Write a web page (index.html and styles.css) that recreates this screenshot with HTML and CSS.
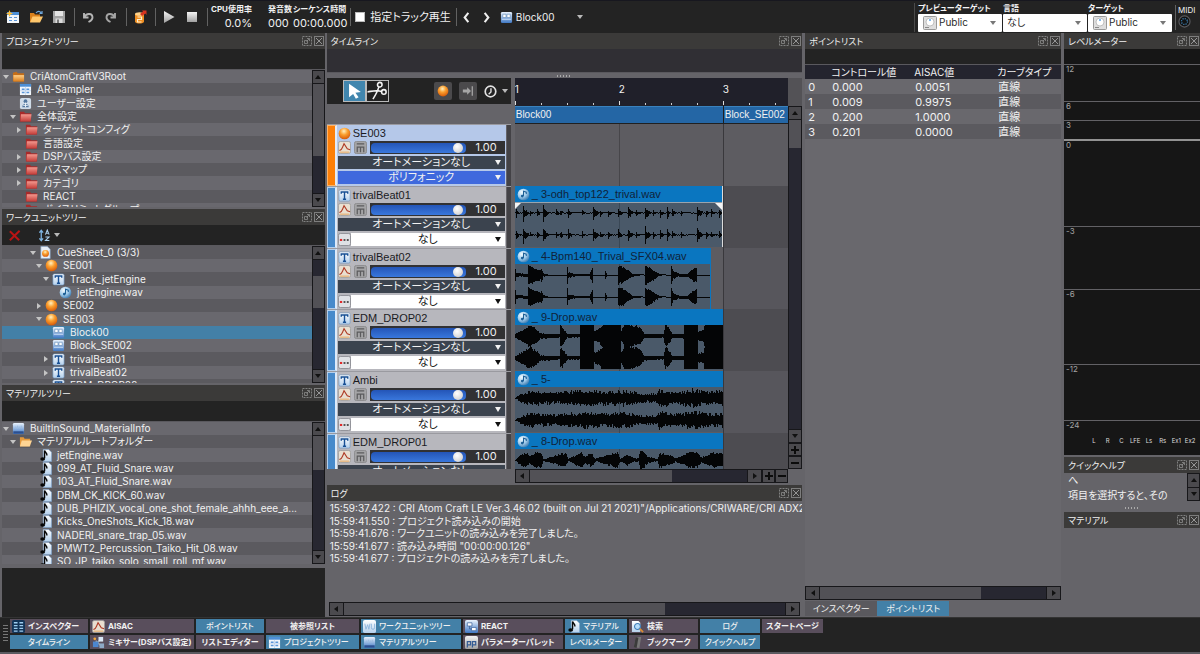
FILE: index.html
```html
<!DOCTYPE html>
<html lang="ja">
<head>
<meta charset="utf-8">
<title>CRI Atom Craft</title>
<link rel="stylesheet" href="styles.css">
</head>
<body>
<svg class="defs" aria-hidden="true">
  <defs>
    <linearGradient id="g-blue" x2="0" y2="1"><stop offset="0" stop-color="#eaf3fd"/><stop offset="1" stop-color="#3f78c4"/></linearGradient>
    <linearGradient id="g-pale" x2="0" y2="1"><stop offset="0" stop-color="#fff"/><stop offset="1" stop-color="#b4d0ec"/></linearGradient>
    <linearGradient id="g-red" x2="0" y2="1"><stop offset="0" stop-color="#f59a90"/><stop offset="1" stop-color="#c23a36"/></linearGradient>
    <linearGradient id="g-gold" x2="0" y2="1"><stop offset="0" stop-color="#ffd089"/><stop offset="1" stop-color="#d97b18"/></linearGradient>
    <linearGradient id="g-steel" x2="0" y2="1"><stop offset="0" stop-color="#f4f4f4"/><stop offset="1" stop-color="#a0a0a0"/></linearGradient>
    <radialGradient id="g-orange" cx=".45" cy=".3" r=".7"><stop offset="0" stop-color="#fff0c0"/><stop offset=".45" stop-color="#fba030"/><stop offset="1" stop-color="#d65a08"/></radialGradient>
    <radialGradient id="g-ball" cx=".35" cy=".3" r=".7"><stop offset="0" stop-color="#f2fbff"/><stop offset=".6" stop-color="#9dc9ea"/><stop offset="1" stop-color="#4b86b8"/></radialGradient>
  </defs>
  <symbol id="i-table" viewBox="0 0 14 14"><rect x="1" y="1" width="12" height="12" fill="#f2f6fb"/><rect x="1" y="1" width="12" height="3" fill="#4d8fd6"/><path d="M3 6h3v1.500H3zM8 6h3v1.500H8zM3 9.500h3V11H3zM8 9.500h3V11H8z" fill="#5b96d8"/><path d="M1 8.300h12M7 4v9" stroke="#a9c6e6" stroke-width=".6"/></symbol>
  <symbol id="i-new" viewBox="0 0 14 14"><rect x="1" y="2" width="12" height="11" fill="#f2f6fb"/><rect x="1" y="2" width="12" height="3" fill="#4d8fd6"/><path d="M3 7h3v1H3zM8 7h3v1H8zM3 10h3v1H3zM8 10h3v1H8z" fill="#5b96d8"/><path d="M3.500 0l1 2.400L7 3.500l-2.500 1L3.500 7l-1-2.500L0 3.500l2.500-1z" fill="#ffbf3a"/></symbol>
  <symbol id="i-open" viewBox="0 0 14 14"><path d="M1 3h4l1 1.500h5V12H1z" fill="#d9801c"/><path d="M3.500 6.500H14L11 12.500H1z" fill="#ffc76c"/><path d="M7 3c2-2.500 4-2 5 0M13 1v2.500h-2.500" stroke="#6ea7de" fill="none" stroke-width="1.200"/></symbol>
  <symbol id="i-save" viewBox="0 0 14 14"><path d="M1 1h12v12H1z" fill="#a3a3a3"/><path d="M3 1h8v5H3z" fill="#e4e4e4"/><path d="M3.500 8.500h7V13h-7z" fill="#dcdcdc"/><path d="M5 9.500h2V13H5z" fill="#777"/></symbol>
  <symbol id="i-undo" viewBox="0 0 14 14"><path d="M3 3v4.500h4.500M3.500 7C5 3.500 11 2.500 11.500 7c.2 2.500-2 4-4 5" fill="none" stroke="#b5b5b5" stroke-width="1.900"/></symbol>
  <symbol id="i-redo" viewBox="0 0 14 14"><path d="M11 3v4.500H6.500M10.500 7C9 3.500 3 2.500 2.500 7c-.2 2.500 2 4 4 5" fill="none" stroke="#a5a5a5" stroke-width="1.900"/></symbol>
  <symbol id="i-build" viewBox="0 0 14 14"><path d="M2 4v8c2 2 7 2 9 0V4z" fill="#ee8e22"/><ellipse cx="6.500" cy="4" rx="4.500" ry="1.800" fill="#ffd28a"/><path d="M4.500 7h4v2.500h-4V12h4" stroke="#fff0cf" fill="none" stroke-width="1.200"/><path d="M7 4l3-2.500L9 .5h4.500V5L12.500 3.500 9 6z" fill="#d63420"/></symbol>
  <symbol id="i-play" viewBox="0 0 14 14"><path d="M2 1l10.500 6L2 13z" fill="url(#g-steel)"/></symbol>
  <symbol id="i-stop" viewBox="0 0 14 14"><path d="M2 2h10v10H2z" fill="url(#g-steel)"/></symbol>
  <symbol id="i-prev" viewBox="0 0 14 14"><path d="M9 2L5 7l4 5" fill="none" stroke="#f0f0f0" stroke-width="2.200"/></symbol>
  <symbol id="i-next" viewBox="0 0 14 14"><path d="M5 2l4 5-4 5" fill="none" stroke="#f0f0f0" stroke-width="2.200"/></symbol>
  <symbol id="i-block" viewBox="0 0 14 14"><rect x="1" y="1" width="12" height="12" rx="1.500" fill="url(#g-blue)"/><path d="M3 3.500h3.500V7H3zM7.500 3.500H11V7H7.500z" fill="#fff" stroke="#668fbd" stroke-width=".7"/><path d="M2 9h10" stroke="#c5dcf5"/></symbol>
  <symbol id="i-device" viewBox="0 0 14 14"><rect x=".5" y=".5" width="13" height="13" rx="1" fill="#dedede" stroke="#999"/><circle cx="7" cy="6" r="4" fill="#fff" stroke="#aaa" stroke-width=".7"/><circle cx="7" cy="4" r="1" fill="#58a6e8"/><path d="M2 11.500h4" stroke="#888"/></symbol>
  <symbol id="i-midi" viewBox="0 0 14 14"><circle cx="7" cy="7" r="6" fill="#111" stroke="#5b5b5f" stroke-width="1.200"/><circle cx="7" cy="7" r="3.200" fill="none" stroke="#3f86bd" stroke-width="1.400" stroke-dasharray="1.200 1.300"/></symbol>
  <symbol id="i-float" viewBox="0 0 10 10"><rect x=".5" y=".5" width="9" height="9" fill="none" stroke="#808080" stroke-dasharray="2 1"/><path d="M2.500 4.500h3v3h-3zM5 2.500h2.500V5M4.500 5.500L7 3" fill="none" stroke="#8c8c8c" stroke-width=".8"/></symbol>
  <symbol id="i-close" viewBox="0 0 10 10"><rect x=".5" y=".5" width="9" height="9" fill="none" stroke="#7d7d7d"/><path d="M2 2l6 6M8 2L2 8" stroke="#959595"/></symbol>
  <symbol id="i-folder" viewBox="0 0 14 14"><path d="M1 3l4-1 1 1.500h7V12H1z" fill="#c66e17"/><path d="M1.500 5.500H13V12.500H1.500z" fill="url(#g-gold)"/></symbol>
  <symbol id="i-folder-open" viewBox="0 0 14 14"><path d="M1 2.500h4l1 1.500h6V12H1z" fill="#e69a3c"/><path d="M3 6h11l-2.500 6.500H1z" fill="#ffd594"/></symbol>
  <symbol id="i-red" viewBox="0 0 14 14"><path d="M1 2h4.500l1 1.500H13v9H1z" fill="#a82a2a"/><path d="M2 4.500h11.500L12.500 12.500H1.500z" fill="url(#g-red)"/></symbol>
  <symbol id="i-user" viewBox="0 0 14 14"><rect x="1" y="1" width="12" height="12" rx="2" fill="#cfdbe8"/><circle cx="7" cy="4.500" r="2" fill="#53779f"/><path d="M3.500 11c0-5 7-5 7 0z" fill="#53779f"/><path d="M7 6v5M4.500 9h5" stroke="#eef5fc"/></symbol>
  <symbol id="i-sheet" viewBox="0 0 14 14"><path d="M2 .5h7l3 3V13.500H2z" fill="#e6eef8" stroke="#89a8cc" stroke-width=".7"/><circle cx="7" cy="8" r="3.700" fill="url(#g-orange)"/></symbol>
  <symbol id="i-cue" viewBox="0 0 14 14"><circle cx="7" cy="7" r="6.300" fill="url(#g-orange)"/></symbol>
  <symbol id="i-track" viewBox="0 0 14 14"><rect x="1" y="1" width="12" height="12" rx="1.500" fill="url(#g-pale)" stroke="#6f96c0" stroke-width=".7"/><path d="M3.500 5V3.300h7V5M7 3.500V11M5.300 11h3.400" fill="none" stroke="#174f94" stroke-width="1.500"/></symbol>
  <symbol id="i-wave" viewBox="0 0 14 14"><circle cx="7" cy="7" r="6.300" fill="url(#g-ball)"/><path d="M7 8.500V3.500l3 1v2" fill="none" stroke="#1d5f96" stroke-width="1.100"/><circle cx="5.700" cy="8.700" r="1.500" fill="#1d5f96"/></symbol>
  <symbol id="i-db" viewBox="0 0 14 14"><rect x="1" y="1" width="12" height="12" rx="1.500" fill="url(#g-blue)"/><path d="M1.500 10h11v2.500h-11z" fill="#2c4f8e"/><path d="M4 7V5M6 7V4M8 7V5M10 7V4" stroke="#9cbce0"/></symbol>
  <symbol id="i-note" viewBox="0 0 14 14"><path d="M4.500 .5h6l3 3V13.500H4.500z" fill="url(#g-pale)" stroke="#7da2cf" stroke-width=".6"/><path d="M6 10V1.500C6.500 4 9 4 8.500 7" fill="none" stroke="#060606" stroke-width="1.500"/><ellipse cx="4" cy="10.700" rx="2.600" ry="1.900" fill="#060606"/></symbol>
  <symbol id="i-delete" viewBox="0 0 14 14"><path d="M2 2.500L12 12M12.500 2L2 12" stroke="#b81414" stroke-width="2.200"/></symbol>
  <symbol id="i-sort" viewBox="0 0 14 14"><path d="M3.500 2v10M1.500 4l2-2.500 2 2.500M1.500 10l2 2.500 2-2.500" stroke="#7db3e2" stroke-width="1.400" fill="none"/><path d="M8 6l2-5 2 5M8.600 4.500h2.800M8 8.500h4L8 12.500h4.200" stroke="#a9cdec" fill="none" stroke-width="1.100"/></symbol>
  <symbol id="i-cursor" viewBox="0 0 22 22"><path d="M5 3l13 9-6 .8 3.500 5-3 1.700-3-5.200L5 18z" fill="#fff"/></symbol>
  <symbol id="i-cut" viewBox="0 0 22 22"><g fill="none" stroke="#f3f3f3" stroke-width="1.700"><circle cx="13.500" cy="4" r="2.500"/><circle cx="18" cy="12" r="2.500"/><path d="M12.500 6.500C11 12 8.500 16 6 20M15.500 11.500C10 9.500 6 11 0 12"/></g></symbol>
  <symbol id="i-tobar" viewBox="0 0 14 14"><path d="M1 5.300h5V2.500L10.500 7 6 11.500V8.700H1z" fill="#a6a6a6"/><path d="M12 1.500v11" stroke="#a6a6a6" stroke-width="1.500"/></symbol>
  <symbol id="i-clock" viewBox="0 0 14 14"><circle cx="7" cy="7" r="5.700" fill="none" stroke="#e2e2e2" stroke-width="1.800"/><path d="M7.500 3.500v4L5 10" fill="none" stroke="#e2e2e2" stroke-width="1.500"/></symbol>
  <symbol id="i-auto" viewBox="0 0 14 14"><rect x=".5" y=".5" width="13" height="13" rx="2" fill="#e9dfd0" stroke="#999" stroke-width=".8"/><path d="M1.500 10c2 .5 2.500-1 3.500-3.500L6.500 3l3.500 5.500 3 1" fill="none" stroke="#ae3b25" stroke-width="1.200"/><path d="M2 12h10" stroke="#e5a45a"/></symbol>
  <symbol id="i-mute" viewBox="0 0 14 14"><rect x=".5" y=".5" width="13" height="13" rx="2" fill="#a4a4a6" stroke="#8a8a8c"/><path d="M3 3h8M3.500 12V6.500h7V12M7 6.500V12" fill="none" stroke="#5b5b5d" stroke-width="1.300"/></symbol>
  <symbol id="i-dots" viewBox="0 0 14 14"><rect x=".5" y=".5" width="13" height="13" rx="2" fill="#dfe1e5" stroke="#8c8e94"/><path d="M2 7.500h2.500" stroke="#e02a2a" stroke-width="2.200"/><path d="M6 7.500h2M9.500 7.500h2" stroke="#555" stroke-width="2"/></symbol>
  <symbol id="i-inspector" viewBox="0 0 14 14"><rect width="14" height="14" rx="2" fill="#123357"/><path d="M2 3h4M2 6h4M2 9h4M2 12h4M8 3h4M8 6h4M8 9h4M8 12h4" stroke="#9ecdf0" stroke-width="1.500"/></symbol>
  <symbol id="i-mixer" viewBox="0 0 14 14"><path d="M4 5l5 5M4 9l6-6" stroke="#aaa" stroke-width="1.500"/><rect x="7" y="1" width="5" height="5" fill="#d9e7f5"/><rect x="1" y="6" width="6" height="6" fill="#4c86cf"/><rect x="8" y="8" width="5" height="5" fill="#8da8c5"/><circle cx="3" cy="3" r="1.500" fill="#f0a63c"/></symbol>
  <symbol id="i-wu" viewBox="0 0 14 14"><rect width="14" height="14" rx="2" fill="url(#g-pale)"/><path d="M2 4l1.200 6L5 5l1.300 5L7.500 4M9 4v4.500c0 2 3.500 2 3.500 0V4" fill="none" stroke="#8eb4dc" stroke-width="1"/></symbol>
  <symbol id="i-react" viewBox="0 0 14 14"><rect width="14" height="14" rx="2" fill="url(#g-blue)"/><path d="M2.500 3h5v3.500h-5zM7 8h5v3.500H7z" fill="#fff" stroke="#3c629b" stroke-width=".8"/><path d="M5 6.500v3.200h2" stroke="#3c629b" fill="none"/></symbol>
  <symbol id="i-palette" viewBox="0 0 14 14"><rect width="14" height="14" rx="2" fill="url(#g-steel)"/><path d="M2.500 12.500V6H6v3.500H3M8 12.500V6h3.500v3.500H8.500" stroke="#345b94" fill="none" stroke-width="1.300"/></symbol>
  <symbol id="i-search" viewBox="0 0 14 14"><path d="M1 1h7l2 2v10H1z" fill="url(#g-pale)"/><circle cx="7" cy="7" r="3.200" fill="#b5dcfa" stroke="#417eb8" stroke-width="1.200"/><path d="M9.500 9.500L13 13" stroke="#d88b35" stroke-width="2"/></symbol>
  <symbol id="i-bookmark" viewBox="0 0 14 14"><path d="M5 1h6L9 13 3 12z" fill="#777"/><path d="M5 1l3 1-2 11-3-1z" fill="#3b3b3b"/></symbol>
</svg>

<header class="toolbar">
  <div class="tools">
    <button aria-label="新規"><svg class="ic"><use href="#i-new"/></svg></button>
    <button aria-label="開く"><svg class="ic"><use href="#i-open"/></svg></button>
    <button aria-label="保存"><svg class="ic"><use href="#i-save"/></svg></button>
  </div>
  <div class="tools">
    <button aria-label="元に戻す"><svg class="ic"><use href="#i-undo"/></svg></button>
    <button aria-label="やり直す"><svg class="ic"><use href="#i-redo"/></svg></button>
  </div>
  <div class="tools"><button aria-label="ビルド"><svg class="ic"><use href="#i-build"/></svg></button></div>
  <div class="tools">
    <button aria-label="再生"><svg class="ic"><use href="#i-play"/></svg></button>
    <button aria-label="停止"><svg class="ic"><use href="#i-stop"/></svg></button>
  </div>
  <dl class="stats">
    <div><dt>CPU使用率</dt><dd>0.0%</dd></div>
    <div><dt>発音数</dt><dd>000</dd></div>
    <div><dt>シーケンス時間</dt><dd>00:00.000</dd></div>
  </dl>
  <label class="check"><input type="checkbox">指定トラック再生</label>
  <div class="history">
    <button aria-label="前へ"><svg class="ic"><use href="#i-prev"/></svg></button>
    <button aria-label="次へ"><svg class="ic"><use href="#i-next"/></svg></button>
    <button class="current"><svg class="ic"><use href="#i-block"/></svg><span>Block00</span><i class="caret"></i></button>
  </div>
  <div class="targets">
    <label class="combo"><span>プレビューターゲット</span><span class="combo-box"><svg class="ic"><use href="#i-device"/></svg><select class="has-icon"><option>Public</option></select></span></label>
    <label class="combo"><span>言語</span><span class="combo-box"><select><option>なし</option></select></span></label>
    <label class="combo"><span>ターゲット</span><span class="combo-box"><svg class="ic"><use href="#i-device"/></svg><select class="has-icon"><option>Public</option></select></span></label>
    <div class="midi"><span>MIDI</span><svg class="ic"><use href="#i-midi"/></svg></div>
  </div>
</header>

<main class="workspace">
  <div class="col col--trees">
    <section class="panel">
      <h2 class="title">プロジェクトツリー<button aria-label="フロート"><svg><use href="#i-float"/></svg></button><button aria-label="閉じる"><svg><use href="#i-close"/></svg></button></h2>
      <div class="strip"></div>
      <div class="scroller">
        <ul class="tree">
          <li><button class="tg open"></button><svg class="ic"><use href="#i-folder"/></svg><span>CriAtomCraftV3Root</span></li>
          <li class="d1"><i class="tg"></i><svg class="ic"><use href="#i-table"/></svg><span>AR-Sampler</span></li>
          <li class="d1"><i class="tg"></i><svg class="ic"><use href="#i-user"/></svg><span>ユーザー設定</span></li>
          <li class="d1"><button class="tg open"></button><svg class="ic"><use href="#i-red"/></svg><span>全体設定</span></li>
          <li class="d2"><button class="tg shut"></button><svg class="ic"><use href="#i-red"/></svg><span>ターゲットコンフィグ</span></li>
          <li class="d2"><i class="tg"></i><svg class="ic"><use href="#i-red"/></svg><span>言語設定</span></li>
          <li class="d2"><button class="tg shut"></button><svg class="ic"><use href="#i-red"/></svg><span>DSPバス設定</span></li>
          <li class="d2"><button class="tg shut"></button><svg class="ic"><use href="#i-red"/></svg><span>バスマップ</span></li>
          <li class="d2"><button class="tg shut"></button><svg class="ic"><use href="#i-red"/></svg><span>カテゴリ</span></li>
          <li class="d2"><i class="tg"></i><svg class="ic"><use href="#i-red"/></svg><span>REACT</span></li>
          <li class="d2"><i class="tg"></i><svg class="ic"><use href="#i-red"/></svg><span>ボイスリミットグループ</span></li>
        </ul>
        <div class="sb" style="--a:0;--b:71;--c:37"><button class="up" aria-label="上"></button><div class="rail"><i></i></div><button class="down" aria-label="下"></button></div>
      </div>
    </section>
    <section class="panel">
      <h2 class="title">ワークユニットツリー<button aria-label="フロート"><svg><use href="#i-float"/></svg></button><button aria-label="閉じる"><svg><use href="#i-close"/></svg></button></h2>
      <div class="strip strip--tools">
        <button aria-label="削除"><svg class="ic"><use href="#i-delete"/></svg></button>
        <button class="sort" aria-label="並べ替え"><svg class="ic"><use href="#i-sort"/></svg><i class="caret"></i></button>
      </div>
      <div class="scroller">
        <ul class="tree tree--odd">
          <li class="d4"><button class="tg open"></button><svg class="ic"><use href="#i-sheet"/></svg><span>CueSheet_0 (3/3)</span></li>
          <li class="d5"><button class="tg open"></button><svg class="ic"><use href="#i-cue"/></svg><span>SE001</span></li>
          <li class="d6"><button class="tg open"></button><svg class="ic"><use href="#i-track"/></svg><span>Track_jetEngine</span></li>
          <li class="d7"><i class="tg"></i><svg class="ic"><use href="#i-wave"/></svg><span>jetEngine.wav</span></li>
          <li class="d5"><button class="tg shut"></button><svg class="ic"><use href="#i-cue"/></svg><span>SE002</span></li>
          <li class="d5"><button class="tg open"></button><svg class="ic"><use href="#i-cue"/></svg><span>SE003</span></li>
          <li class="d6 selected"><i class="tg"></i><svg class="ic"><use href="#i-block"/></svg><span>Block00</span></li>
          <li class="d6"><i class="tg"></i><svg class="ic"><use href="#i-block"/></svg><span>Block_SE002</span></li>
          <li class="d6"><button class="tg shut"></button><svg class="ic"><use href="#i-track"/></svg><span>trivalBeat01</span></li>
          <li class="d6"><button class="tg shut"></button><svg class="ic"><use href="#i-track"/></svg><span>trivalBeat02</span></li>
          <li class="d6"><button class="tg shut"></button><svg class="ic"><use href="#i-track"/></svg><span>EDM_DROP02</span></li>
        </ul>
        <div class="sb" style="--a:16;--b:32;--c:60"><button class="up" aria-label="上"></button><div class="rail"><i></i></div><button class="down" aria-label="下"></button></div>
      </div>
    </section>
    <section class="panel panel--material">
      <h2 class="title">マテリアルツリー<button aria-label="フロート"><svg><use href="#i-float"/></svg></button><button aria-label="閉じる"><svg><use href="#i-close"/></svg></button></h2>
      <div class="strip"></div>
      <div class="scroller">
        <ul class="tree">
          <li><button class="tg open"></button><svg class="ic"><use href="#i-db"/></svg><span>BuiltInSound_MaterialInfo</span></li>
          <li class="d1"><button class="tg open"></button><svg class="ic"><use href="#i-folder-open"/></svg><span>マテリアルルートフォルダー</span></li>
          <li class="d4"><i class="tg"></i><svg class="ic"><use href="#i-note"/></svg><span>jetEngine.wav</span></li>
          <li class="d4"><i class="tg"></i><svg class="ic"><use href="#i-note"/></svg><span>099_AT_Fluid_Snare.wav</span></li>
          <li class="d4"><i class="tg"></i><svg class="ic"><use href="#i-note"/></svg><span>103_AT_Fluid_Snare.wav</span></li>
          <li class="d4"><i class="tg"></i><svg class="ic"><use href="#i-note"/></svg><span>DBM_CK_KICK_60.wav</span></li>
          <li class="d4"><i class="tg"></i><svg class="ic"><use href="#i-note"/></svg><span>DUB_PHIZIX_vocal_one_shot_female_ahhh_eee_a...</span></li>
          <li class="d4"><i class="tg"></i><svg class="ic"><use href="#i-note"/></svg><span>Kicks_OneShots_Kick_18.wav</span></li>
          <li class="d4"><i class="tg"></i><svg class="ic"><use href="#i-note"/></svg><span>NADERI_snare_trap_05.wav</span></li>
          <li class="d4"><i class="tg"></i><svg class="ic"><use href="#i-note"/></svg><span>PMWT2_Percussion_Taiko_Hit_08.wav</span></li>
          <li class="d4"><i class="tg"></i><svg class="ic"><use href="#i-note"/></svg><span>SO_JP_taiko_solo_small_roll_mf.wav</span></li>
        </ul>
        <div class="sb" style="--a:0;--b:34;--c:79"><button class="up" aria-label="上"></button><div class="rail"><i></i></div><button class="down" aria-label="下"></button></div>
      </div>
    </section>
    <div class="empty"></div>
  </div>

  <div class="col col--center">
    <section class="panel">
      <h2 class="title">タイムライン<button aria-label="フロート"><svg><use href="#i-float"/></svg></button><button aria-label="閉じる"><svg><use href="#i-close"/></svg></button></h2>
      <div class="strip strip--timeline"></div>
      <div class="grip"></div>
      <div class="timeline">
        <div class="tracks">
          <div class="track-tools">
            <button class="mode active" aria-label="選択"><svg><use href="#i-cursor"/></svg></button>
            <button class="mode" aria-label="分割"><svg><use href="#i-cut"/></svg></button>
            <span class="spacer"></span>
            <button class="square" aria-label="キュー"><svg class="ic"><use href="#i-cue"/></svg></button>
            <button class="square" aria-label="末尾へ"><svg class="ic"><use href="#i-tobar"/></svg></button>
            <button class="clock" aria-label="時間"><svg class="ic"><use href="#i-clock"/></svg><i class="caret"></i></button>
          </div>
          <div class="track-gap"></div>
          <div class="track-list">
            <article class="track track--cue">
              <div class="bar"></div>
              <div class="track-body">
                <h3><svg class="ic"><use href="#i-cue"/></svg>SE003</h3>
                <div class="vol"><button aria-label="カーブ"><svg class="ic"><use href="#i-auto"/></svg></button><button aria-label="ミュート"><svg class="ic"><use href="#i-mute"/></svg></button><label><input type="range" value="97" aria-label="音量"><span>1.00</span></label></div>
                <div class="pick pick--auto"><select aria-label="オートメーション"><option>オートメーションなし</option></select></div>
                <div class="pick pick--poly"><select aria-label="再生方式"><option>ポリフォニック</option></select></div>
              </div>
            </article>
            <article class="track">
              <div class="bar"></div>
              <div class="track-body">
                <h3><svg class="ic"><use href="#i-track"/></svg>trivalBeat01</h3>
                <div class="vol"><button aria-label="カーブ"><svg class="ic"><use href="#i-auto"/></svg></button><button aria-label="ミュート"><svg class="ic"><use href="#i-mute"/></svg></button><label><input type="range" value="97" aria-label="音量"><span>1.00</span></label></div>
                <div class="pick pick--auto"><select aria-label="オートメーション"><option>オートメーションなし</option></select></div>
                <div class="pick pick--none"><svg class="ic"><use href="#i-dots"/></svg><select aria-label="遷移"><option>なし</option></select></div>
              </div>
            </article>
            <article class="track">
              <div class="bar"></div>
              <div class="track-body">
                <h3><svg class="ic"><use href="#i-track"/></svg>trivalBeat02</h3>
                <div class="vol"><button aria-label="カーブ"><svg class="ic"><use href="#i-auto"/></svg></button><button aria-label="ミュート"><svg class="ic"><use href="#i-mute"/></svg></button><label><input type="range" value="97" aria-label="音量"><span>1.00</span></label></div>
                <div class="pick pick--auto"><select aria-label="オートメーション"><option>オートメーションなし</option></select></div>
                <div class="pick pick--none"><svg class="ic"><use href="#i-dots"/></svg><select aria-label="遷移"><option>なし</option></select></div>
              </div>
            </article>
            <article class="track">
              <div class="bar"></div>
              <div class="track-body">
                <h3><svg class="ic"><use href="#i-track"/></svg>EDM_DROP02</h3>
                <div class="vol"><button aria-label="カーブ"><svg class="ic"><use href="#i-auto"/></svg></button><button aria-label="ミュート"><svg class="ic"><use href="#i-mute"/></svg></button><label><input type="range" value="97" aria-label="音量"><span>1.00</span></label></div>
                <div class="pick pick--auto"><select aria-label="オートメーション"><option>オートメーションなし</option></select></div>
                <div class="pick pick--none"><svg class="ic"><use href="#i-dots"/></svg><select aria-label="遷移"><option>なし</option></select></div>
              </div>
            </article>
            <article class="track">
              <div class="bar"></div>
              <div class="track-body">
                <h3><svg class="ic"><use href="#i-track"/></svg>Ambi</h3>
                <div class="vol"><button aria-label="カーブ"><svg class="ic"><use href="#i-auto"/></svg></button><button aria-label="ミュート"><svg class="ic"><use href="#i-mute"/></svg></button><label><input type="range" value="97" aria-label="音量"><span>1.00</span></label></div>
                <div class="pick pick--auto"><select aria-label="オートメーション"><option>オートメーションなし</option></select></div>
                <div class="pick pick--none"><svg class="ic"><use href="#i-dots"/></svg><select aria-label="遷移"><option>なし</option></select></div>
              </div>
            </article>
            <article class="track">
              <div class="bar"></div>
              <div class="track-body">
                <h3><svg class="ic"><use href="#i-track"/></svg>EDM_DROP01</h3>
                <div class="vol"><button aria-label="カーブ"><svg class="ic"><use href="#i-auto"/></svg></button><button aria-label="ミュート"><svg class="ic"><use href="#i-mute"/></svg></button><label><input type="range" value="97" aria-label="音量"><span>1.00</span></label></div>
                <div class="pick pick--auto"><select aria-label="オートメーション"><option>オートメーションなし</option></select></div>
                <div class="pick pick--none"><svg class="ic"><use href="#i-dots"/></svg><select aria-label="遷移"><option>なし</option></select></div>
              </div>
            </article>
          </div>
          <div class="track-foot"></div>
        </div>
        <div class="arrange">
          <div class="ruler"><span>1</span><span>2</span><span>3</span></div>
          <div class="corner"></div>
          <div class="lanes">
            <div class="blocks"><span>Block00</span><span>Block_SE002</span></div>
            <div class="lane"></div>
            <div class="lane"><div class="clip clip--faded"><h4><svg class="ic"><use href="#i-wave"/></svg>_ 3-odh_top122_trival.wav</h4><svg class="pcm" data-wave="beat"></svg></div></div>
            <div class="lane"><div class="clip clip--short"><h4><svg class="ic"><use href="#i-wave"/></svg>_ 4-Bpm140_Trival_SFX04.wav</h4><svg class="pcm" data-wave="sfx"></svg></div></div>
            <div class="lane"><div class="clip"><h4><svg class="ic"><use href="#i-wave"/></svg>_ 9-Drop.wav</h4><svg class="pcm" data-wave="drop"></svg></div></div>
            <div class="lane"><div class="clip"><h4><svg class="ic"><use href="#i-wave"/></svg>_ 5-</h4><svg class="pcm" data-wave="ambient"></svg></div></div>
            <div class="lane"><div class="clip"><h4><svg class="ic"><use href="#i-wave"/></svg>_ 8-Drop.wav</h4><svg class="pcm" data-wave="blobs"></svg></div></div>
          </div>
          <div class="vzoom">
            <div class="sb" style="--a:0;--b:28;--c:282"><button class="up" aria-label="上"></button><div class="rail"><i></i></div><button class="down" aria-label="下"></button></div>
            <button class="plus" aria-label="縦拡大"></button><button class="plus minus" aria-label="縦縮小"></button>
          </div>
          <div class="hzoom">
            <div class="sb sb--h" style="--a:0;--b:142;--c:75"><button class="left" aria-label="左"></button><div class="rail"><i></i></div><button class="right" aria-label="右"></button></div>
            <button class="plus" aria-label="横拡大"></button><button class="plus minus" aria-label="横縮小"></button>
          </div>
        </div>
      </div>
    </section>
    <section class="panel">
      <h2 class="title">ログ<button aria-label="フロート"><svg><use href="#i-float"/></svg></button><button aria-label="閉じる"><svg><use href="#i-close"/></svg></button></h2>
      <div class="log">
        <p>15:59:37.422 : CRI Atom Craft LE Ver.3.46.02 (built on Jul 21 2021)"/Applications/CRIWARE/CRI ADX2</p>
        <p>15:59:41.550 : プロジェクト読み込みの開始</p>
        <p>15:59:41.676 : ワークユニットの読み込みを完了しました。</p>
        <p>15:59:41.677 : 読み込み時間 "00:00:00.126"</p>
        <p>15:59:41.677 : プロジェクトの読み込みを完了しました。</p>
      </div>
      <div class="sb sb--h sb--log" style="--a:0;--b:323;--c:121"><button class="left" aria-label="左"></button><div class="rail"><i></i></div><button class="right" aria-label="右"></button></div>
    </section>
  </div>

  <div class="col col--points">
    <section class="panel">
      <h2 class="title">ポイントリスト<button aria-label="フロート"><svg><use href="#i-float"/></svg></button><button aria-label="閉じる"><svg><use href="#i-close"/></svg></button></h2>
      <div class="strip strip--points"></div>
      <div class="points">
        <table>
          <thead><tr><th></th><th>コントロール値</th><th>AISAC値</th><th>カーブタイプ</th></tr></thead>
          <tbody>
            <tr><td>0</td><td>0.000</td><td>0.0051</td><td>直線</td></tr>
            <tr><td>1</td><td>0.009</td><td>0.9975</td><td>直線</td></tr>
            <tr><td>2</td><td>0.200</td><td>1.0000</td><td>直線</td></tr>
            <tr><td>3</td><td>0.201</td><td>0.0000</td><td>直線</td></tr>
          </tbody>
        </table>
      </div>
      <div class="sb sb--h sb--points" style="--a:0;--b:162;--c:66"><button class="left" aria-label="左"></button><div class="rail"><i></i></div><button class="right" aria-label="右"></button></div>
      <nav class="tabs"><button>インスペクター</button><button class="active">ポイントリスト</button></nav>
    </section>
  </div>

  <div class="col col--meter">
    <section class="panel">
      <h2 class="title">レベルメーター<button aria-label="フロート"><svg><use href="#i-float"/></svg></button><button aria-label="閉じる"><svg><use href="#i-close"/></svg></button></h2>
      <div class="meter">
        <div></div><div>12</div><div>6</div><div>3</div><div class="zero">0</div><div>-3</div><div>-6</div><div>-12</div>
        <div>-24<p class="channels"><span>L</span><span>R</span><span>C</span><span>LFE</span><span>Ls</span><span>Rs</span><span>Ex1</span><span>Ex2</span></p></div>
      </div>
    </section>
    <section class="panel">
      <h2 class="title">クイックヘルプ<button aria-label="フロート"><svg><use href="#i-float"/></svg></button><button aria-label="閉じる"><svg><use href="#i-close"/></svg></button></h2>
      <div class="help">
        <div><p>へ</p><p>項目を選択すると、その</p></div>
        <div class="sb sb--tiny"><button class="up" aria-label="上"></button><button class="down" aria-label="下"></button></div>
      </div>
      <div class="grip"></div>
    </section>
    <section class="panel">
      <h2 class="title">マテリアル<button aria-label="フロート"><svg><use href="#i-float"/></svg></button><button aria-label="閉じる"><svg><use href="#i-close"/></svg></button></h2>
    </section>
  </div>
</main>

<footer class="dock">
  <i class="handle"></i>
  <button><svg class="ic"><use href="#i-inspector"/></svg><span>インスペクター</span></button>
  <button><svg class="ic"><use href="#i-auto"/></svg><span>AISAC</span></button>
  <button class="on"><span>ポイントリスト</span></button>
  <button><span>被参照リスト</span></button>
  <button class="on"><svg class="ic"><use href="#i-wu"/></svg><span>ワークユニットツリー</span></button>
  <button><svg class="ic"><use href="#i-react"/></svg><span>REACT</span></button>
  <button class="on"><svg class="ic"><use href="#i-note"/></svg><span>マテリアル</span></button>
  <button><svg class="ic"><use href="#i-search"/></svg><span>検索</span></button>
  <button class="on"><span>ログ</span></button>
  <button><span>スタートページ</span></button>
  <button class="on"><span>タイムライン</span></button>
  <button><svg class="ic"><use href="#i-mixer"/></svg><span>ミキサー(DSPバス設定)</span></button>
  <button><span>リストエディター</span></button>
  <button class="on"><svg class="ic"><use href="#i-table"/></svg><span>プロジェクトツリー</span></button>
  <button class="on"><svg class="ic"><use href="#i-db"/></svg><span>マテリアルツリー</span></button>
  <button><svg class="ic"><use href="#i-palette"/></svg><span>パラメーターパレット</span></button>
  <button class="on"><span>レベルメーター</span></button>
  <button><svg class="ic"><use href="#i-bookmark"/></svg><span>ブックマーク</span></button>
  <button class="on"><span>クイックヘルプ</span></button>
</footer>
<script src="waves.js"></script>
</body>
</html>
```
FILE: styles.css
```css
* { box-sizing: border-box; }
body {
  margin: 0; height: 100vh; display: flex; flex-direction: column; overflow: hidden;
  background: #656469; color: #f1f1f1;
  font: 10px/13px Inter, "Noto Sans CJK JP", sans-serif;
  font-feature-settings: "palt";
}
h2, h3, h4, p, ul, dl, dd { margin: 0; padding: 0; font-weight: 400; }
ul { list-style: none; }
button, select, input { font: inherit; color: inherit; margin: 0; font-feature-settings: inherit; }
button { border: 0; padding: 0; background: none; display: flex; align-items: center; justify-content: center; }
select { appearance: none; border: 0; border-radius: 0; background: none; padding: 0; }
.defs { position: absolute; width: 0; height: 0; }
.ic { width: 13px; height: 13px; flex: none; display: block; }
.caret { border: 3px solid transparent; border-top: 4px solid #b9b9b9; border-bottom: 0; }
.spacer { flex: 1; }

/* toolbar */
.toolbar { flex: none; height: 33px; background: #232323; border-top: 1px solid #17171f; display: flex; align-items: center; }
.tools { display: flex; align-items: center; gap: 9px; padding: 0 8px 0 6px; height: 18px; border-right: 1px solid #626262; }
.tools .ic { width: 14px; height: 14px; }
.stats { display: flex; height: 28px; padding-left: 3px; padding-right: 3px; }
.stats div { text-align: right; }
.stats div + div { margin-left: 16px; }
.stats div:last-child { margin-left: 1px; }
.stats dt { font: 700 8px/13px Inter, "Noto Sans CJK JP", sans-serif; text-align: left; }
.stats dd { font-size: 11px; line-height: 15px; }
.stats div:nth-child(2) dd { text-align: left; }
.check { display: flex; align-items: center; gap: 5px; font-size: 11px; height: 18px; padding: 0 5px 0 4px; border: solid #626262; border-width: 0 1px; }
.check input { appearance: none; width: 10px; height: 10px; background: #fff; border: 1px solid #bbb; }
.history { display: flex; align-items: center; gap: 7px; padding-left: 3px; }
.current { gap: 3px; }
.current .caret { margin-left: 19px; }
.targets { margin-left: auto; display: flex; align-items: stretch; gap: 1px; border-left: 1px solid #4a4a4a; padding-left: 3px; }
.combo { width: 84px; font: 700 8px/11px Inter, "Noto Sans CJK JP", sans-serif; color: #f4f4f4; }
.combo > span:first-child { display: block; }
.combo-box { display: block; position: relative; font: 10px/17px Inter, "Noto Sans CJK JP", sans-serif; }
.combo-box select { width: 100%; height: 18px; background: #fff; color: #2c2c2c; padding-left: 4px; border-radius: 1px; }
.combo-box select.has-icon { padding-left: 21px; }
.combo-box .ic { position: absolute; left: 5px; top: 2px; width: 14px; height: 14px; }
.combo-box::after { content: ""; position: absolute; right: 6px; top: 7px; border: 3px solid transparent; border-top: 4px solid #777; border-bottom: 0; }
.midi { width: 25px; border-left: 1px solid #626262; margin: 2px 0 2px 2px; padding-left: 2px; font-size: 8px; line-height: 10px; }

/* workspace */
.workspace { flex: 1; min-height: 0; display: grid; grid-template-columns: 323fr 476fr 258fr 136fr; gap: 2px; padding-left: 2px; }
.col { display: grid; gap: 2px; min-height: 0; min-width: 0; }
.col--trees { grid-template-rows: 174fr 174fr 181fr 49fr; }
.col--center { grid-template-rows: 450fr 132fr; }
.col--meter { grid-template-rows: 422fr 53fr 105fr; }
.col--points { padding: 0 1px; }
.panel { display: flex; flex-direction: column; min-height: 0; min-width: 0; overflow: hidden; }
.panel--material { padding-bottom: 2px; }
.title { flex: none; height: 16px; background: #3b3a39; display: flex; align-items: center; gap: 2px; padding: 0 1px 0 4px; font-size: 9px; }
.title svg { width: 10px; height: 10px; display: block; }
.title button:first-of-type { margin-left: auto; }
.strip { flex: none; height: 21px; background: #232323; border-bottom: 1px solid #5a595e; }
.strip--tools { display: flex; align-items: center; padding-left: 6px; gap: 17px; }
.strip--tools .sort { gap: 3px; }
.strip--timeline { height: 24px; background: #302f34; }
.strip--points { height: 16px; }
.empty { background: #232323; }
.grip { flex: none; height: 5px; width: 15px; align-self: center; background: repeating-linear-gradient(90deg, #aaa 0 1px, transparent 1px 3px) center / 100% 2px no-repeat; }

/* trees */
.scroller { flex: 1; min-height: 0; display: flex; }
.tree { flex: 1; min-width: 0; overflow: hidden; background: #656469; }
.tree li { display: flex; align-items: center; height: 13px; background: #69686e; white-space: nowrap; }
.tree li:nth-child(3n) { height: 14px; }
.tree li:nth-child(even), .tree--odd li:nth-child(odd) { background: #5b5a5f; }
.tree--odd li:nth-child(even) { background: #69686e; }
.tree li.selected { background: #4380a7; }
.tree span { padding-left: 5px; }
.tg { flex: none; width: 10px; height: 12px; display: flex; align-items: center; padding-left: 1px; justify-content: flex-start; }
.tg.open::after { content: ""; border: 3px solid transparent; border-top: 4px solid #c4c4c4; border-bottom: 0; }
.tg.shut::after { content: ""; border: 3px solid transparent; border-left: 4px solid #c4c4c4; border-right: 0; margin-left: 1px; }
.d1 { padding-left: 7px; } .d2 { padding-left: 13px; } .d4 { padding-left: 27px; }
.d5 { padding-left: 33px; } .d6 { padding-left: 40px; } .d7 { padding-left: 47px; }

/* scroll bars */
.sb { flex: none; width: 13px; display: flex; flex-direction: column; background: #17171a; padding: 1px; gap: 1px; }
.sb button { height: 12px; background: #4b4a4e; flex: none; }
.sb button::after { content: ""; border: 3px solid transparent; }
.sb .up::after { border-bottom: 4px solid #111; border-top: 0; }
.sb .down::after { border-top: 4px solid #111; border-bottom: 0; }
.sb .left::after { border-right: 4px solid #111; border-left: 0; }
.sb .right::after { border-left: 4px solid #111; border-right: 0; }
.rail { flex: 1; display: flex; flex-direction: column; background: #272731; min-height: 0; }
.rail::before { content: ""; flex: var(--a) 0 0; }
.rail::after { content: ""; flex: var(--c) 0 0; }
.rail i { flex: var(--b) 0 0; background: #525156; }
.sb--h { width: auto; height: 14px; flex-direction: row; }
.sb--h .rail { flex-direction: row; }
.sb--h button { width: 13px; height: auto; }
.sb--log { margin: 0 2px 1px; }
.sb--tiny { height: 28px; }
.plus { position: relative; width: 14px; height: 13px; background: #4b4a4e; border: 1px solid #17171a; }
.plus::before { content: ""; width: 8px; height: 2px; background: #0c0c0c; }
.plus:not(.minus)::after { content: ""; position: absolute; width: 2px; height: 8px; background: #0c0c0c; }

/* timeline */
.timeline { flex: 1; min-height: 0; display: flex; gap: 4px; }
.tracks { width: 184px; flex: none; display: flex; flex-direction: column; }
.track-tools { height: 26px; flex: none; background: #232323; display: flex; align-items: center; padding: 0 3px 0 16px; }
.mode { width: 23px; height: 22px; border: 1px solid #b9b9b9; }
.mode svg { width: 21px; height: 20px; }
.mode.active { background: #4186ae; }
.square { width: 18px; height: 18px; border-radius: 2px; background: #4b4a4c; margin-right: 7px; }
.square .ic { width: 12px; height: 12px; }
.clock { gap: 5px; }
.track-gap { height: 20px; flex: none; }
.track-list { flex: 1; min-height: 0; overflow: hidden; }
.track-foot { height: 14px; flex: none; }
.track { height: 62px; display: flex; border-top: 1px solid #9a9aa0; padding-right: 5px; font-family: "Liberation Sans", "Noto Sans CJK JP", sans-serif; color: #1b1b1f; background: linear-gradient(#434246, #434246) right / 4px 100% no-repeat; }
.track:nth-child(3n) { height: 61px; }
.track .bar { width: 10px; background: #478acb; border: 1px solid #b4cfec; border-right: 2px solid #dceafa; }
.track--cue .bar { background: #fd7f08; border-color: #ffb469; border-right-color: #e4eaf6; }
.track-body { flex: 1; min-width: 0; background: #b7b7bd; padding: 0 1px; display: flex; flex-direction: column; }
.track--cue .track-body { background: #b5c8e9; }
.track h3 { font-size: 11px; line-height: 15px; height: 16px; display: flex; align-items: center; gap: 2px; flex: none; }
.vol { height: 13px; flex: none; display: flex; gap: 3px; align-items: center; }
.vol label { flex: 1; height: 13px; background: #313133; display: flex; align-items: center; justify-content: space-between; padding: 0 8px 0 1px; color: #f0f0f0; font: 11px/13px Inter, sans-serif; }
.vol input { appearance: none; width: 95px; height: 10px; border-radius: 4px; background: linear-gradient(#2455b7, #3977dc); }
.vol input::-webkit-slider-thumb { appearance: none; width: 10px; height: 10px; border-radius: 50%; background: radial-gradient(circle at 40% 35%, #fff, #c5c5c5); }
.pick { position: relative; height: 13px; flex: none; display: flex; margin-top: 2px; color: #f2f2f2; font-size: 11px; }
.pick select { width: 100%; height: 13px; line-height: 13px; text-align-last: center; }
.pick::after { content: ""; position: absolute; right: 4px; top: 4px; border: 3px solid transparent; border-top: 5px solid currentColor; border-bottom: 0; }
.pick--auto { background: #3b434e; }
.pick--poly { background: #3f69dd; }
.pick--none { background: #fff; color: #111; }
.pick--none .ic { background: #b7b7bd; }

.arrange { flex: 1; min-width: 0; display: grid; grid-template: 28px 1fr 14px / 1fr 14px; }
.ruler { display: flex; overflow: hidden; background: repeating-linear-gradient(90deg, #ddd 0 1px, transparent 1px 104px) 0 23px / 100% 4px no-repeat, repeating-linear-gradient(90deg, #ccc 0 1px, transparent 1px 26px) 0 25px / 100% 2px no-repeat, #20202a; }
.ruler span { flex: none; width: 104px; padding-top: 5px; }
.corner { background: #535256; }
.lanes { min-height: 0; overflow: hidden; background: linear-gradient(90deg, transparent 104px, #47464a 104px 105px, transparent 105px 208px, #39383c 208px 209px, transparent 209px), #5d5c61; }
.blocks { display: flex; height: 18px; background: #202020; padding-bottom: 1px; font: 10px/16px "Liberation Sans", sans-serif; }
.blocks span { flex: none; width: 208px; background: #2466a5; border-top: 1px solid #3a82bd; margin-right: 1px; padding-left: 1px; overflow: hidden; }
.blocks span:last-child { flex: 1; width: auto; margin: 0; }
.lane { height: 62px; background: linear-gradient(90deg, transparent 209px, #57565c 209px); }
.lane:nth-child(odd) { background: linear-gradient(90deg, transparent 209px, #4d4c51 209px); }
.lane:nth-child(2) { background: none; }
.lane:nth-child(4) { height: 61px; }
.clip { width: 208px; height: 61px; background: linear-gradient(#3a4856, #3a4856) 104px 0 / 1px 100% no-repeat, #4a5969; display: flex; flex-direction: column; }
.clip--short { width: 196px; border-right: 1px solid #0a76c0; }
.clip h4 { flex: none; height: 16px; background: #0a76c0; color: #10233a; display: flex; align-items: center; gap: 2px; padding-left: 2px; font: 11px/16px "Liberation Sans", sans-serif; }
.clip .pcm { flex: 1; min-height: 0; width: 100%; display: block; }
.clip--faded { border-right: 1px solid #dcdcdc; }
.vzoom { display: flex; flex-direction: column; }
.vzoom .sb { flex: 1; width: 14px; }
.hzoom { display: flex; grid-column: 1; }
.hzoom .sb { flex: 1; }
.hzoom .plus { height: 14px; width: 13px; }

/* log */
.log { flex: 1; min-height: 0; padding: 1px 0 0 3px; overflow: hidden; }
.log p { line-height: 13px; white-space: nowrap; }
.log p:nth-child(2n) { line-height: 12px; }

/* point list */
.points { flex: 1; min-height: 0; background: #69686d; }
.points table { width: 100%; border-collapse: collapse; table-layout: fixed; }
.points th { height: 14px; background: #24242e; font-weight: 400; text-align: left; padding: 0 0 0 2px; }
.points th:nth-child(1) { width: 24px; } .points th:nth-child(2) { width: 83px; } .points th:nth-child(3) { width: 83px; }
.points td { height: 15px; padding: 0 0 0 3px; font-size: 11px; line-height: 14px; }
.points tr:nth-child(even) td { background: #5b5a5f; }
.tabs { flex: none; display: flex; height: 15px; font-size: 9px; margin: 1px 0; }
.tabs button { width: 72px; background: #5a595e; }
.tabs .active { background: #4380a7; }

/* meters */
.meter { flex: 1; background: #161616; min-height: 0; display: grid; grid-template-rows: 15fr 37fr 19fr 19fr 87fr 63fr 75fr 56fr 35fr; font-size: 8px; line-height: 9px; color: #a3a3a3; }
.meter > div { padding: 0 2px; }
.meter > div + div { border-top: 1px solid #626165; }
.meter > .zero { border-top: 2px solid #929292; }
.channels { display: flex; justify-content: space-between; padding: 7px 1px 0 21px; font-size: 6px; line-height: 8px; color: #ddd; }
.channels span { flex: 1; text-align: center; }
.help { flex: 1; min-height: 0; display: flex; justify-content: space-between; overflow: hidden; }
.help p { padding: 0 4px; line-height: 15px; white-space: nowrap; }
.sb--tiny button { flex: 1; }

/* dock */
.dock { flex: none; height: 37px; background: #232323; border-bottom: 2px solid #5b5a60; border-top: 1px solid #333; padding: 1px 0 2px 3px; display: grid; grid-template-columns: 5px 78px 104px 68px 93px 100px 100px 62px 69px 60px 61px; grid-template-rows: 14px 14px; column-gap: 2px; row-gap: 2px; }
.dock .handle { grid-row: 1 / 3; margin: 6px 0; background: repeating-linear-gradient(#777 0 1px, transparent 1px 3px); }
.dock button { background: #594e5c; font: 700 8px/14px Inter, "Noto Sans CJK JP", sans-serif; white-space: nowrap; overflow: hidden; gap: 3px; padding: 0 2px; }
.dock button:has(svg) { justify-content: flex-start; }
.dock .on { background: #4380a7; font-weight: 500; }

/* proportional kana where the font shorthand resets it */
.stats dt, .combo, .combo-box, .combo-box select, .dock button { font-feature-settings: "palt"; }
```
FILE: waves.js
```js
// Amplitude envelopes: [x, level] pairs joined by straight lines.
const hits = (list) => list.flatMap(([x, a, w]) => [[x - 1, 0.08], [x, a], [x + 1, a * 0.5], [x + w, 0.08]]);
const envelopes = {
  beat: { noise: 0.5, points: hits([[1, .5, 3], [8, 1, 6], [14.5, .4, 3], [22, .5, 3], [28, 1, 6], [41, .4, 3], [45.5, .4, 3], [53, .6, 4], [67, .4, 3], [78, 1, 6], [85, .4, 4], [93, .4, 4], [103, .6, 4], [113, .9, 5], [121, .4, 4], [130, 1, 6], [138, .4, 3], [145, .5, 4], [152, .7, 3], [157, .5, 4], [166, .3, 3], [182, 1, 6], [191, .4, 3], [196, .4, 4], [204, .5, 3]]) },
  sfx: { noise: 0.2, points: [[0, .7], [1, .2], [12, .15], [13, 1], [18, .8], [25, .5], [26, .7], [28, .2], [33, .05], [51, .02], [52, .9], [53, .3], [60, .12], [74, .12], [77, .8], [78, .02], [89, .02], [90, .45], [92, .02], [102, .02], [103, 1], [108, .85], [117, .15], [129, .05], [130, 1], [135, .75], [144, .1], [155, .02], [156, 1], [158, .4], [164, .15], [172, .15], [178, .7], [181, .8], [182, .02], [196, .01]] },
  drop: { noise: 0.25, points: [[0, .25], [8, .7], [14, 1.2], [22, .7], [25, .3], [44, .2], [45, 1.2], [47, 1], [52, .2], [64, .2], [65, 1.8], [78, 1.8], [79, .6], [84, .8], [88, 1.5], [104, 1.8], [106, .6], [110, 1.5], [125, .9], [129, .25], [148, .2], [150, 1.2], [155, .7], [157, .2], [168, .25], [169, 1.8], [182, 1.8], [183, .5], [188, .6], [190, 1.8], [208, 1.8]] },
  ambient: { noise: 0.5, points: [[0, .05], [6, .5], [16, .8], [40, .6], [70, .9], [90, .75], [110, .85], [125, .55], [142, .5], [144, 1], [160, .65], [178, 1], [195, .7], [208, .85]] },
  blobs: { noise: 0.3, points: [[0, .05], [6, .7], [12, .8], [14, .4], [20, .8], [26, .8], [28, .1], [40, .5], [50, .8], [53, .15], [66, .8], [70, .4], [76, .8], [80, .15], [102, .9], [105, .15], [112, .6], [119, .2], [123, .2], [125, 1.2], [132, .4], [142, .1], [144, .8], [156, .5], [160, .2], [176, .9], [182, .9], [186, .3], [198, .8], [208, .7]] }
};

let seed = 7;
const random = () => (seed = (seed * 16807) % 2147483647) / 2147483647;

function level(points, x) {
  const i = points.findIndex((p) => p[0] >= x);
  if (i < 0) return points[points.length - 1][1];
  if (i === 0) return points[0][1];
  const [x0, y0] = points[i - 1];
  const [x1, y1] = points[i];
  return x1 === x0 ? y1 : y0 + (y1 - y0) * Math.max(0, (x - x0) / (x1 - x0));
}

document.querySelectorAll(".pcm").forEach((svg) => {
  const { points, noise } = envelopes[svg.dataset.wave];
  const width = Math.round(svg.getBoundingClientRect().width);
  let d = "";
  for (const centre of [11, 33]) {
    for (let x = 0; x < width; x++) {
      const a = level(points, x) * 10;
      const up = Math.min(11, a * (1 - noise * random()));
      const down = Math.min(11, a * (1 - noise * random()));
      const top = Math.round(centre - up);
      const height = Math.max(1, Math.round(up + down));
      d += `M${x} ${top}h1v${height}h-1z`;
    }
  }
  let extra = "";
  if (svg.dataset.wave === "beat") {
    extra = `<path d="M0 7V0H7ZM${width} 8V0H${width - 8}Z" fill="#f4f4f4"/><path d="M0 .5H${width}" stroke="#9aa4ae"/>`;
  }
  svg.innerHTML = `<path d="${d}" fill="#040506"/>${extra}`;
});
```
